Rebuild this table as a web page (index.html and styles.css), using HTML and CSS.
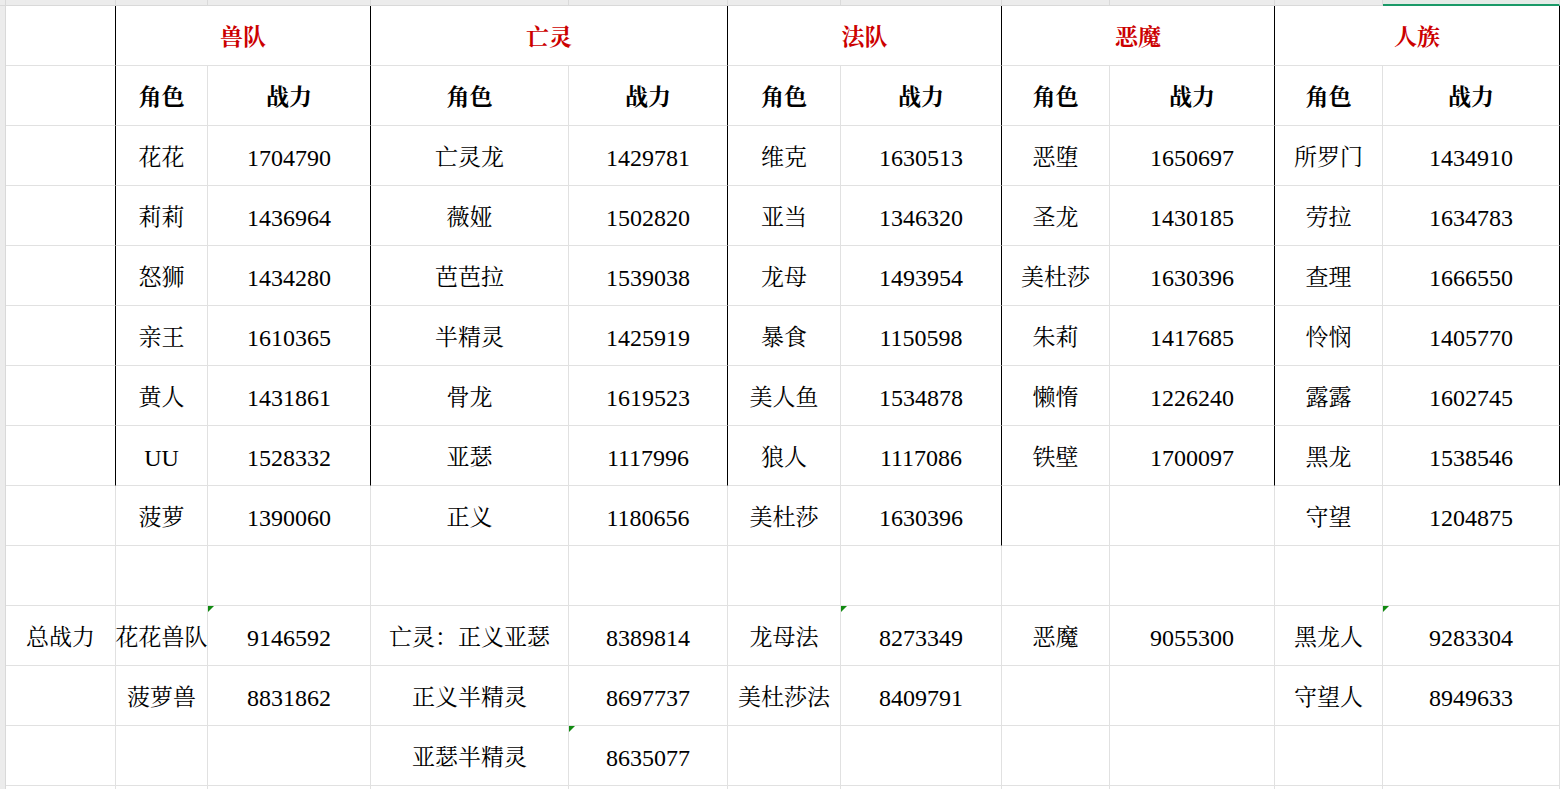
FILE: index.html
```html
<!DOCTYPE html>
<html lang="zh-CN">
<head>
<meta charset="utf-8">
<title>战力表</title>
<link rel="stylesheet" href="styles.css">
</head>
<body>
<div class="sheet">
  <div class="colhead">
    <div class="corner"></div>
    <div class="ch"></div><div class="ch"></div><div class="ch"></div><div class="ch"></div><div class="ch"></div><div class="ch"></div><div class="ch"></div><div class="ch"></div><div class="ch"></div><div class="ch"></div><div class="ch sel"></div>
  </div>
  <div class="body">
    <div class="rowhead"></div>
    <div class="grid">
      <!-- row 1 -->
      <div class="c k"></div>
      <div class="c s2 k team">兽队</div>
      <div class="c s2 k team">亡灵</div>
      <div class="c s2 k team">法队</div>
      <div class="c s2 k team">恶魔</div>
      <div class="c s2 k team">人族</div>
      <!-- row 2 -->
      <div class="c k"></div>
      <div class="c th">角色</div><div class="c k th">战力</div>
      <div class="c th">角色</div><div class="c k th">战力</div>
      <div class="c th">角色</div><div class="c k th">战力</div>
      <div class="c th">角色</div><div class="c k th">战力</div>
      <div class="c th">角色</div><div class="c k th">战力</div>
      <!-- row 3 -->
      <div class="c k"></div>
      <div class="c">花花</div><div class="c k n">1704790</div>
      <div class="c">亡灵龙</div><div class="c k n">1429781</div>
      <div class="c">维克</div><div class="c k n">1630513</div>
      <div class="c">恶堕</div><div class="c k n">1650697</div>
      <div class="c">所罗门</div><div class="c k n">1434910</div>
      <!-- row 4 -->
      <div class="c k"></div>
      <div class="c">莉莉</div><div class="c k n">1436964</div>
      <div class="c">薇娅</div><div class="c k n">1502820</div>
      <div class="c">亚当</div><div class="c k n">1346320</div>
      <div class="c">圣龙</div><div class="c k n">1430185</div>
      <div class="c">劳拉</div><div class="c k n">1634783</div>
      <!-- row 5 -->
      <div class="c k"></div>
      <div class="c">怒狮</div><div class="c k n">1434280</div>
      <div class="c">芭芭拉</div><div class="c k n">1539038</div>
      <div class="c">龙母</div><div class="c k n">1493954</div>
      <div class="c">美杜莎</div><div class="c k n">1630396</div>
      <div class="c">查理</div><div class="c k n">1666550</div>
      <!-- row 6 -->
      <div class="c k"></div>
      <div class="c">亲王</div><div class="c k n">1610365</div>
      <div class="c">半精灵</div><div class="c k n">1425919</div>
      <div class="c">暴食</div><div class="c k n">1150598</div>
      <div class="c">朱莉</div><div class="c k n">1417685</div>
      <div class="c">怜悯</div><div class="c k n">1405770</div>
      <!-- row 7 -->
      <div class="c k"></div>
      <div class="c">黄人</div><div class="c k n">1431861</div>
      <div class="c">骨龙</div><div class="c k n">1619523</div>
      <div class="c">美人鱼</div><div class="c k n">1534878</div>
      <div class="c">懒惰</div><div class="c k n">1226240</div>
      <div class="c">露露</div><div class="c k n">1602745</div>
      <!-- row 8 -->
      <div class="c k"></div>
      <div class="c n">UU</div><div class="c k n">1528332</div>
      <div class="c">亚瑟</div><div class="c k n">1117996</div>
      <div class="c">狼人</div><div class="c k n">1117086</div>
      <div class="c">铁壁</div><div class="c k n">1700097</div>
      <div class="c">黑龙</div><div class="c k n">1538546</div>
      <!-- row 9 -->
      <div class="c"></div>
      <div class="c">菠萝</div><div class="c n">1390060</div>
      <div class="c">正义</div><div class="c n">1180656</div>
      <div class="c">美杜莎</div><div class="c k n">1630396</div>
      <div class="c"></div><div class="c"></div>
      <div class="c">守望</div><div class="c n">1204875</div>
      <!-- row 10 -->
      <div class="c"></div>
      <div class="c"></div><div class="c"></div>
      <div class="c"></div><div class="c"></div>
      <div class="c"></div><div class="c"></div>
      <div class="c"></div><div class="c"></div>
      <div class="c"></div><div class="c"></div>
      <!-- row 11 -->
      <div class="c">总战力</div>
      <div class="c">花花兽队</div><div class="c n mark">9146592</div>
      <div class="c">亡灵：正义亚瑟</div><div class="c n">8389814</div>
      <div class="c">龙母法</div><div class="c n mark">8273349</div>
      <div class="c">恶魔</div><div class="c n">9055300</div>
      <div class="c">黑龙人</div><div class="c n mark">9283304</div>
      <!-- row 12 -->
      <div class="c"></div>
      <div class="c">菠萝兽</div><div class="c n">8831862</div>
      <div class="c">正义半精灵</div><div class="c n">8697737</div>
      <div class="c">美杜莎法</div><div class="c n">8409791</div>
      <div class="c"></div><div class="c"></div>
      <div class="c">守望人</div><div class="c n">8949633</div>
      <!-- row 13 -->
      <div class="c"></div>
      <div class="c"></div><div class="c"></div>
      <div class="c">亚瑟半精灵</div><div class="c n mark">8635077</div>
      <div class="c"></div><div class="c"></div>
      <div class="c"></div><div class="c"></div>
      <div class="c"></div><div class="c"></div>
      <!-- row 14 -->
      <div class="c"></div>
      <div class="c"></div><div class="c"></div>
      <div class="c"></div><div class="c"></div>
      <div class="c"></div><div class="c"></div>
      <div class="c"></div><div class="c"></div>
      <div class="c"></div><div class="c"></div>
    </div>
  </div>
</div>
</body>
</html>
```

FILE: styles.css
```css
html, body {
  margin: 0;
  padding: 0;
  background: #ffffff;
  overflow: hidden;
}

.sheet {
  width: 1560px;
  height: 789px;
  overflow: hidden;
  font-family: "Liberation Serif", "Noto Serif CJK SC", "Noto Sans CJK SC", serif;
  font-size: 23px;
  color: #000000;
}

.colhead {
  display: grid;
  grid-template-columns: 6px 110px 92px 163px 198px 159px 113px 161px 108px 165px 108px 177px;
  height: 6px;
}

.corner {
  background: #ececec;
  border-bottom: 1px solid #d9d9d9;
  border-right: 1px solid #d9d9d9;
  box-sizing: border-box;
}

.ch {
  background: #ececec;
  border-right: 1px solid #dadada;
  border-bottom: 1px solid #d9d9d9;
  box-sizing: border-box;
}

.ch.sel {
  background: #e4ebe7;
  border-bottom: 2px solid #1a9a68;
}

.body {
  display: flex;
}

.rowhead {
  width: 6px;
  flex: none;
  background: #ececec;
  border-right: 1px solid #d9d9d9;
  box-sizing: border-box;
  height: 783px;
}

.grid {
  display: grid;
  grid-template-columns: 110px 92px 163px 198px 159px 113px 161px 108px 165px 108px 177px;
  grid-auto-rows: 60px;
}

.c {
  position: relative;
  box-sizing: border-box;
  border-right: 1px solid #e1e1e1;
  border-bottom: 1px solid #e1e1e1;
  display: flex;
  align-items: center;
  justify-content: center;
  padding-top: 4px;
  white-space: nowrap;
  line-height: 1;
}

.c.n {
  font-size: 24px;
}

.c.k {
  border-right-color: #000000;
}

.s2 {
  grid-column: span 2;
}

.team {
  color: #cc0000;
  font-weight: bold;
  padding-top: 3px;
}

.th {
  font-weight: bold;
}

.mark::before {
  content: "";
  position: absolute;
  left: 0;
  top: 0;
  width: 0;
  height: 0;
  border-top: 6px solid #118a11;
  border-right: 6px solid transparent;
}
```
